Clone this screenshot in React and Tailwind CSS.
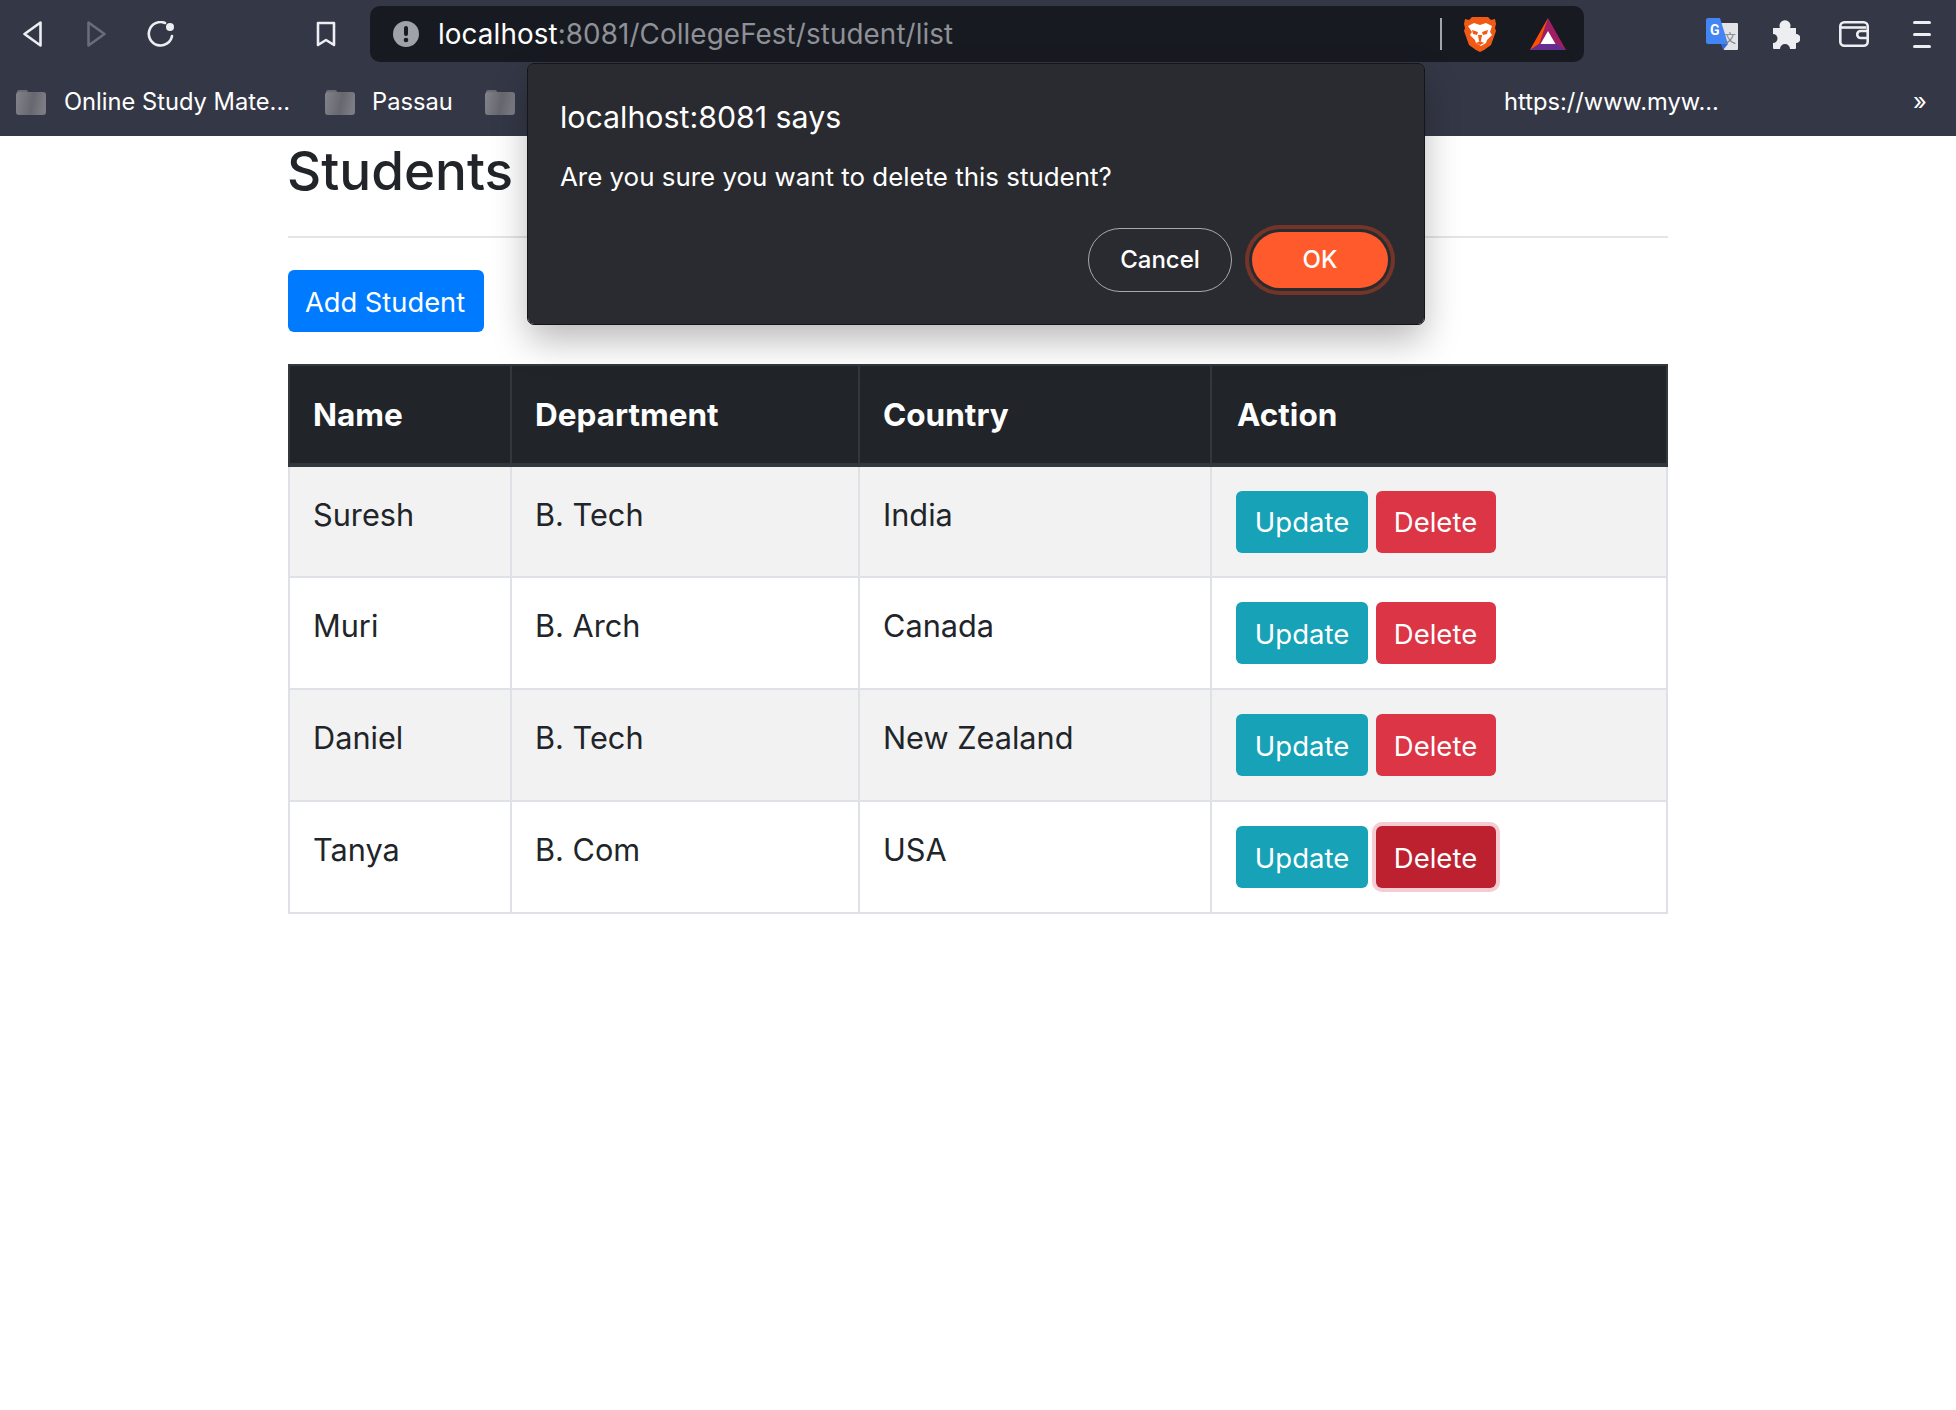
const students = [
  { name: "Suresh", department: "B. Tech", country: "India" },
  { name: "Muri", department: "B. Arch", country: "Canada" },
  { name: "Daniel", department: "B. Tech", country: "New Zealand" },
  { name: "Tanya", department: "B. Com", country: "USA" },
]

function Folder() {
  return (
    <svg width="30" height="26" viewBox="0 0 30 26" className="shrink-0">
      <defs>
        <linearGradient id="folderFill" x1="0" y1="0" x2="1" y2="0.15">
          <stop offset="0" stopColor="#83848b" />
          <stop offset="0.6" stopColor="#66676f" />
          <stop offset="1" stopColor="#7b7c84" />
        </linearGradient>
      </defs>
      <path d="M1 3a2 2 0 0 1 2-2h7a2 2 0 0 1 2 2v2H1z" fill="#6a6b74" />
      <rect x="0" y="3" width="30" height="23" rx="3" fill="url(#folderFill)" />
    </svg>
  )
}

function BraveIcon() {
  return (
    <svg width="32" height="36" viewBox="0 0 32 36">
      <path d="M8 1h16l3 3 4-1 1 5-1 4 1 3-5 14-7 5-4 2-4-2-7-5L0 15l1-3-1-4 1-5 4 1z" fill="#f15a14" />
      <path d="M4 10l6-3 6 2 6-2 6 3-2 6 2 3-5 5-1 3-5 3-5-3-1-3-5-5 2-3z" fill="#fff" />
      <path d="M8 14l6 2-1 3-4-1zM24 14l-6 2 1 3 4-1zM14 19h4l-1 6h-2zM12 27l4-2 4 2-4 2z" fill="#f15a14" />
    </svg>
  )
}

function BatIcon() {
  return (
    <svg width="36" height="32" viewBox="0 0 36 32">
      <path d="M18 0L0 32h36z" fill="#9e1f63" />
      <path d="M18 0L0 32l9-6z" fill="#ff5000" />
      <path d="M0 32h36l-9-6H9z" fill="#662d91" />
      <path d="M18 13l-7.500 13h15z" fill="#fff" />
    </svg>
  )
}

function TranslateIcon() {
  return (
    <svg width="32" height="32" viewBox="0 0 32 32" className="shrink-0">
      <path d="M13 5h18a1 1 0 0 1 1 1v25a1 1 0 0 1-1 1H18z" fill="#e3e4e6" />
      <path d="M17 32l5-6h-7z" fill="#3367d6" />
      <path d="M2 0h12l8 26H2a2 2 0 0 1-2-2V2a2 2 0 0 1 2-2z" fill="#4285f4" />
      <text x="4" y="17" fontSize="14" fontWeight="700" fill="#fff" fontFamily="Roboto, sans-serif">G</text>
      <text x="18" y="25" fontSize="12" fill="#7b8088" fontFamily="Noto Sans CJK SC, sans-serif">文</text>
    </svg>
  )
}

export default function App() {
  return (
    <div className="relative min-h-[1410px] bg-white font-['Inter',sans-serif] text-[#212529]">
      {/* browser chrome */}
      <div className="h-[136px] bg-[#343746] text-white">
        <div className="flex h-[68px] items-start">
          <div className="flex h-[68px] w-[370px] items-center pl-[23px]">
            <svg width="19" height="26" viewBox="0 0 19 26" fill="none" stroke="#eceef2" strokeWidth="2.600" strokeLinejoin="round" className="shrink-0">
              <path d="M17.500 1.500v23L1.500 13z" />
            </svg>
            <svg width="19" height="26" viewBox="0 0 19 26" fill="none" stroke="#696c7b" strokeWidth="2.600" strokeLinejoin="round" className="ml-[45px] shrink-0">
              <path d="M1.500 1.500v23L17.500 13z" />
            </svg>
            <svg width="28" height="26" viewBox="0 0 28 26" fill="none" className="ml-[41px] shrink-0">
              <path d="M18 2A11.700 11.700 0 1 0 25 15" stroke="#eceef2" strokeWidth="2.600" strokeLinecap="round" />
              <circle cx="23" cy="6" r="4" fill="#eceef2" />
            </svg>
            <svg width="20" height="26" viewBox="0 0 20 26" fill="none" stroke="#eceef2" strokeWidth="2.600" strokeLinejoin="round" className="ml-[141px] shrink-0">
              <path d="M2 2h16v22l-8-5-8 5z" />
            </svg>
          </div>
          <div className="mt-[6px] flex h-[56px] w-[1214px] items-center rounded-[10px] bg-[#181a21] pl-[23px]">
            <svg width="26" height="26" viewBox="0 0 26 26" className="shrink-0">
              <circle cx="13" cy="13" r="13" fill="#a0a2a9" />
              <rect x="11" y="5" width="4" height="10" rx="2" fill="#181a21" />
              <circle cx="13" cy="19" r="2.300" fill="#181a21" />
            </svg>
            <div className="ml-[19px] pt-[2px] text-[27.8px] leading-none tracking-[0.1px]">
              localhost<span className="text-[#8f9197]">:8081/CollegeFest/student/list</span>
            </div>
            <div className="ml-auto flex items-center">
              <div className="h-8 w-[2px] bg-[#a3a5aa]" />
              <div className="ml-[22px]"><BraveIcon /></div>
              <div className="ml-[34px] mr-[18px]"><BatIcon /></div>
            </div>
          </div>
          <div className="flex h-[68px] flex-1 items-center pl-[122px]">
            <TranslateIcon />
            <svg width="28" height="29" viewBox="0 0 28 29" className="ml-[34px] shrink-0">
              <path d="M1 8H8A5.500 5.500 0 1 1 18 8H24V14A4.500 4.500 0 1 1 24 23V28a1 1 0 0 1-1 1H18A5 5 0 0 0 8 29H2a1 1 0 0 1-1-1V23A4.500 4.500 0 0 0 1 14Z" fill="#eceef2" />
            </svg>
            <svg width="30" height="26" viewBox="0 0 30 26" fill="none" stroke="#eceef2" strokeWidth="2.600" className="ml-[39px] shrink-0">
              <rect x="1.300" y="1.300" width="27.400" height="23.400" rx="4" />
              <path d="M2 6.500h25" />
              <path d="M28.700 10h-7a3.500 3.500 0 0 0 0 7h7" />
            </svg>
            <div className="ml-[44px] flex flex-col gap-[9px]">
              <div className="h-[3px] w-[18px] rounded-full bg-[#eceef2]" />
              <div className="h-[3px] w-[18px] rounded-full bg-[#eceef2]" />
              <div className="h-[3px] w-[18px] rounded-full bg-[#eceef2]" />
            </div>
          </div>
        </div>
        <div className="flex h-[68px] items-center pl-[16px] text-[23.7px]">
          <Folder />
          <span className="ml-[18px] w-[261px] shrink-0 whitespace-nowrap">Online Study Mate...</span>
          <Folder />
          <span className="ml-[17px] w-[113px] shrink-0 whitespace-nowrap">Passau</span>
          <Folder />
          <span className="ml-[989px] w-[409px] shrink-0 whitespace-nowrap">https://www.myw...</span>
          <span className="shrink-0">»</span>
        </div>
      </div>

      {/* page */}
      <div className="mx-auto w-[1380px]">
        <h1 className="-ml-px pt-[7px] text-[53px] leading-[56px] font-medium">Students</h1>
        <div className="mt-[37px] h-[2px] bg-[#e4e5e7]" />
        <button className="mt-[32px] block h-[62px] w-[196px] rounded-[6px] bg-[#007bff] pt-[4px] pr-[2px] text-[27.3px] text-white">Add Student</button>
        <table className="mt-[32px] w-full table-fixed border-collapse text-[30.700px]">
          <colgroup>
            <col className="w-[222px]" />
            <col className="w-[348px]" />
            <col className="w-[352px]" />
            <col />
          </colgroup>
          <thead>
            <tr className="h-[100px] bg-[#212529] text-left text-[31.500px] text-white">
              <th className="border-2 border-b-4 border-[#32383e] pl-[23px] font-bold">Name</th>
              <th className="border-2 border-b-4 border-[#32383e] pl-[23px] font-bold">Department</th>
              <th className="border-2 border-b-4 border-[#32383e] pl-[23px] font-bold">Country</th>
              <th className="border-2 border-b-4 border-[#32383e] pl-[25px] font-bold">Action</th>
            </tr>
          </thead>
          <tbody>
            {students.map((s, i) => (
              <tr key={s.name} className={i % 2 === 0 ? "h-[112px] bg-[#f2f2f2]" : "h-[112px] bg-white"}>
                <td className="border-2 border-[#dee2e6] pl-[23px] pt-[30px] align-top leading-[36px]">{s.name}</td>
                <td className="border-2 border-[#dee2e6] pl-[23px] pt-[30px] align-top leading-[36px]">{s.department}</td>
                <td className="border-2 border-[#dee2e6] pl-[23px] pt-[30px] align-top leading-[36px]">{s.country}</td>
                <td className="border-2 border-[#dee2e6] pl-[24px] align-middle">
                  <div className="flex gap-2 text-[27.500px] text-white">
                    <button className="h-[62px] w-[132px] rounded-[6px] bg-[#17a2b8] pt-[3px]">Update</button>
                    {i === 3 ? (
                      <button className="h-[62px] w-[120px] rounded-[6px] bg-[#bd2130] pt-[3px] pr-[1px] ring-4 ring-[#f5ccd1]">Delete</button>
                    ) : (
                      <button className="h-[62px] w-[120px] rounded-[6px] bg-[#dc3545] pt-[3px] pr-[1px]">Delete</button>
                    )}
                  </div>
                </td>
              </tr>
            ))}
          </tbody>
        </table>
      </div>

      {/* confirm dialog */}
      <div className="absolute left-[528px] top-[64px] h-[260px] w-[896px] rounded-[6px] bg-[#2a2b30] text-white shadow-[0_16px_36px_rgba(0,0,0,0.28)] outline outline-1 outline-[#15161a]">
        <div className="pl-[32px] pt-[33px] text-[30.300px] leading-[40px]">localhost:8081 says</div>
        <div className="pl-[32px] pt-[22px] text-[25.900px] leading-[36px]">Are you sure you want to delete this student?</div>
        <div className="absolute bottom-[32px] right-[36px] flex items-center gap-[20px]">
          <button className="h-[64px] w-[144px] rounded-full border border-[#a8a9ac] text-[24px] font-medium">Cancel</button>
          <button className="h-[56px] w-[136px] rounded-full bg-[#ff5a2b] text-[24px] font-medium shadow-[0_0_0_3px_#2a2b30,0_0_0_7px_#733527]">OK</button>
        </div>
      </div>
    </div>
  )
}
